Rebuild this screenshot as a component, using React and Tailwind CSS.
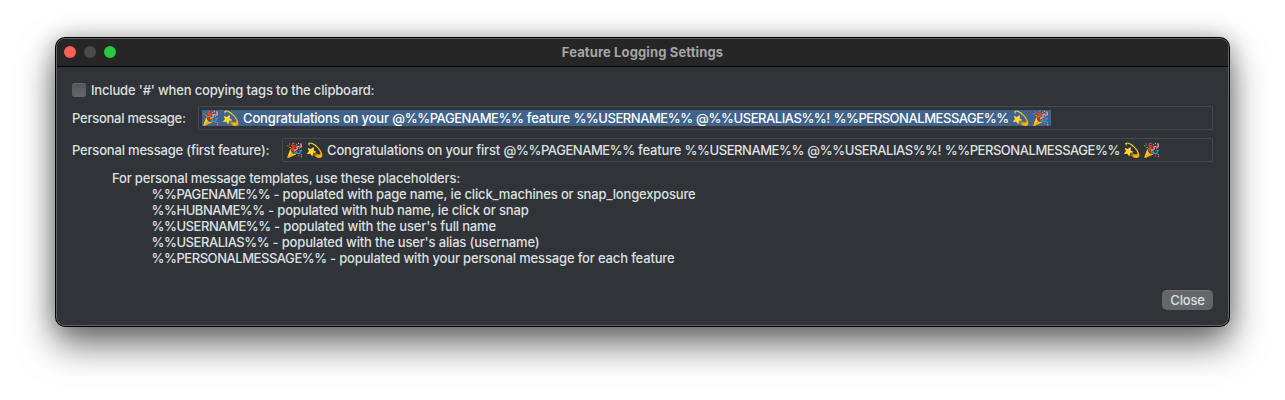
const placeholders = [
  '%%PAGENAME%% - populated with page name, ie click_machines or snap_longexposure',
  '%%HUBNAME%% - populated with hub name, ie click or snap',
  "%%USERNAME%% - populated with the user's full name",
  "%%USERALIAS%% - populated with the user's alias (username)",
  '%%PERSONALMESSAGE%% - populated with your personal message for each feature',
];

function Template({ text }) {
  return (
    <span className="tracking-[-0.155px] whitespace-pre">
      {text.split(/(%%[A-Z]+%%)/).map((part, i) =>
        part.startsWith('%%') ? (
          <span key={i} className="tracking-[-0.45px]">{part}</span>
        ) : (
          part
        ),
      )}
    </span>
  );
}

function Emoji({ children }) {
  return (
    <span className="flex w-[19.5px] shrink-0 justify-start text-[14px] leading-4 tracking-normal">{children}</span>
  );
}

function TitleBar() {
  return (
    <header className="grid h-7 shrink-0 grid-cols-[1fr_auto_1fr] items-center border-b border-black bg-[#262626] px-[7px] pb-[2px]">
      <div className="flex gap-2">
        <span className="size-3 rounded-full bg-[#ff5f57]" />
        <span className="size-3 rounded-full bg-[#4a4a4a]" />
        <span className="size-3 rounded-full bg-[#28c840]" />
      </div>
      <h1 className="text-[13px] leading-4 font-bold tracking-[0.128px] text-[#a5a5a5]">Feature Logging Settings</h1>
      <span />
    </header>
  );
}

function Field({ label, labelClass, message, messageClass, selected }) {
  return (
    <div className="flex h-6 items-center">
      <label className={'shrink-0 whitespace-nowrap ' + labelClass}>{label}</label>
      <div className="flex h-6 flex-1 items-center rounded-[2px] border border-[#46494d] pl-[3px]">
        <div className={'flex h-4 items-center whitespace-nowrap ' + (selected ? 'bg-[#3f638b] text-white' : '')}>
          <Emoji>🎉</Emoji>
          <Emoji>💫</Emoji>
          <span className={'ml-[2px] shrink-0 ' + messageClass}>
            <Template text={message} />
          </span>
          <Emoji>💫</Emoji>
          <Emoji>🎉</Emoji>
        </div>
      </div>
    </div>
  );
}

export default function App() {
  return (
    <main className="h-[400px] w-[1285px] overflow-hidden bg-white px-[55px] pt-[37px] font-['Inter',sans-serif] text-[13px] leading-4 font-medium text-[#dfe0e1]">
      <div className="h-[290px] w-[1175px] rounded-[10px] bg-black p-px shadow-[0_18px_36px_0px_rgba(0,0,0,0.55),0_0_22px_rgba(0,0,0,0.25)]">
        <section className="flex h-full flex-col overflow-hidden rounded-[9px] border border-[#606265] bg-[#303337]">
          <TitleBar />
          <div className="flex flex-1 flex-col p-[15px]">
            <div className="flex h-4 items-center">
              <span className="size-[14px] rounded-[3px] border-t border-[#686b6d] bg-linear-to-b from-[#54575a] to-[#65686a]" />
              <span className="ml-[5px] tracking-[-0.17px]">Include '#' when copying tags to the clipboard:</span>
            </div>
            <div className="mt-2 flex flex-col gap-2">
              <Field
                label="Personal message:"
                labelClass="w-[126px] tracking-[-0.25px]"
                message="Congratulations on your @%%PAGENAME%% feature %%USERNAME%% @%%USERALIAS%%! %%PERSONALMESSAGE%%"
                messageClass="w-[769px]"
                selected
              />
              <Field
                label="Personal message (first feature):"
                labelClass="w-[210px] tracking-[-0.185px]"
                message="Congratulations on your first @%%PAGENAME%% feature %%USERNAME%% @%%USERALIAS%%! %%PERSONALMESSAGE%%"
                messageClass="w-[796px]"
              />
            </div>
            <div className="mt-2 pl-10">
              <p className="tracking-[-0.173px]">For personal message templates, use these placeholders:</p>
              <ul className="pl-[39.5px]">
                {placeholders.map((text) => (
                  <li key={text}>
                    <Template text={text} />
                  </li>
                ))}
              </ul>
            </div>
            <button className="mt-auto h-5 w-[51px] self-end rounded-[5px] border-t border-[#75797b] bg-[#636769] pb-[2px] text-center leading-4 tracking-[-0.2px]">
              Close
            </button>
          </div>
        </section>
      </div>
    </main>
  );
}
